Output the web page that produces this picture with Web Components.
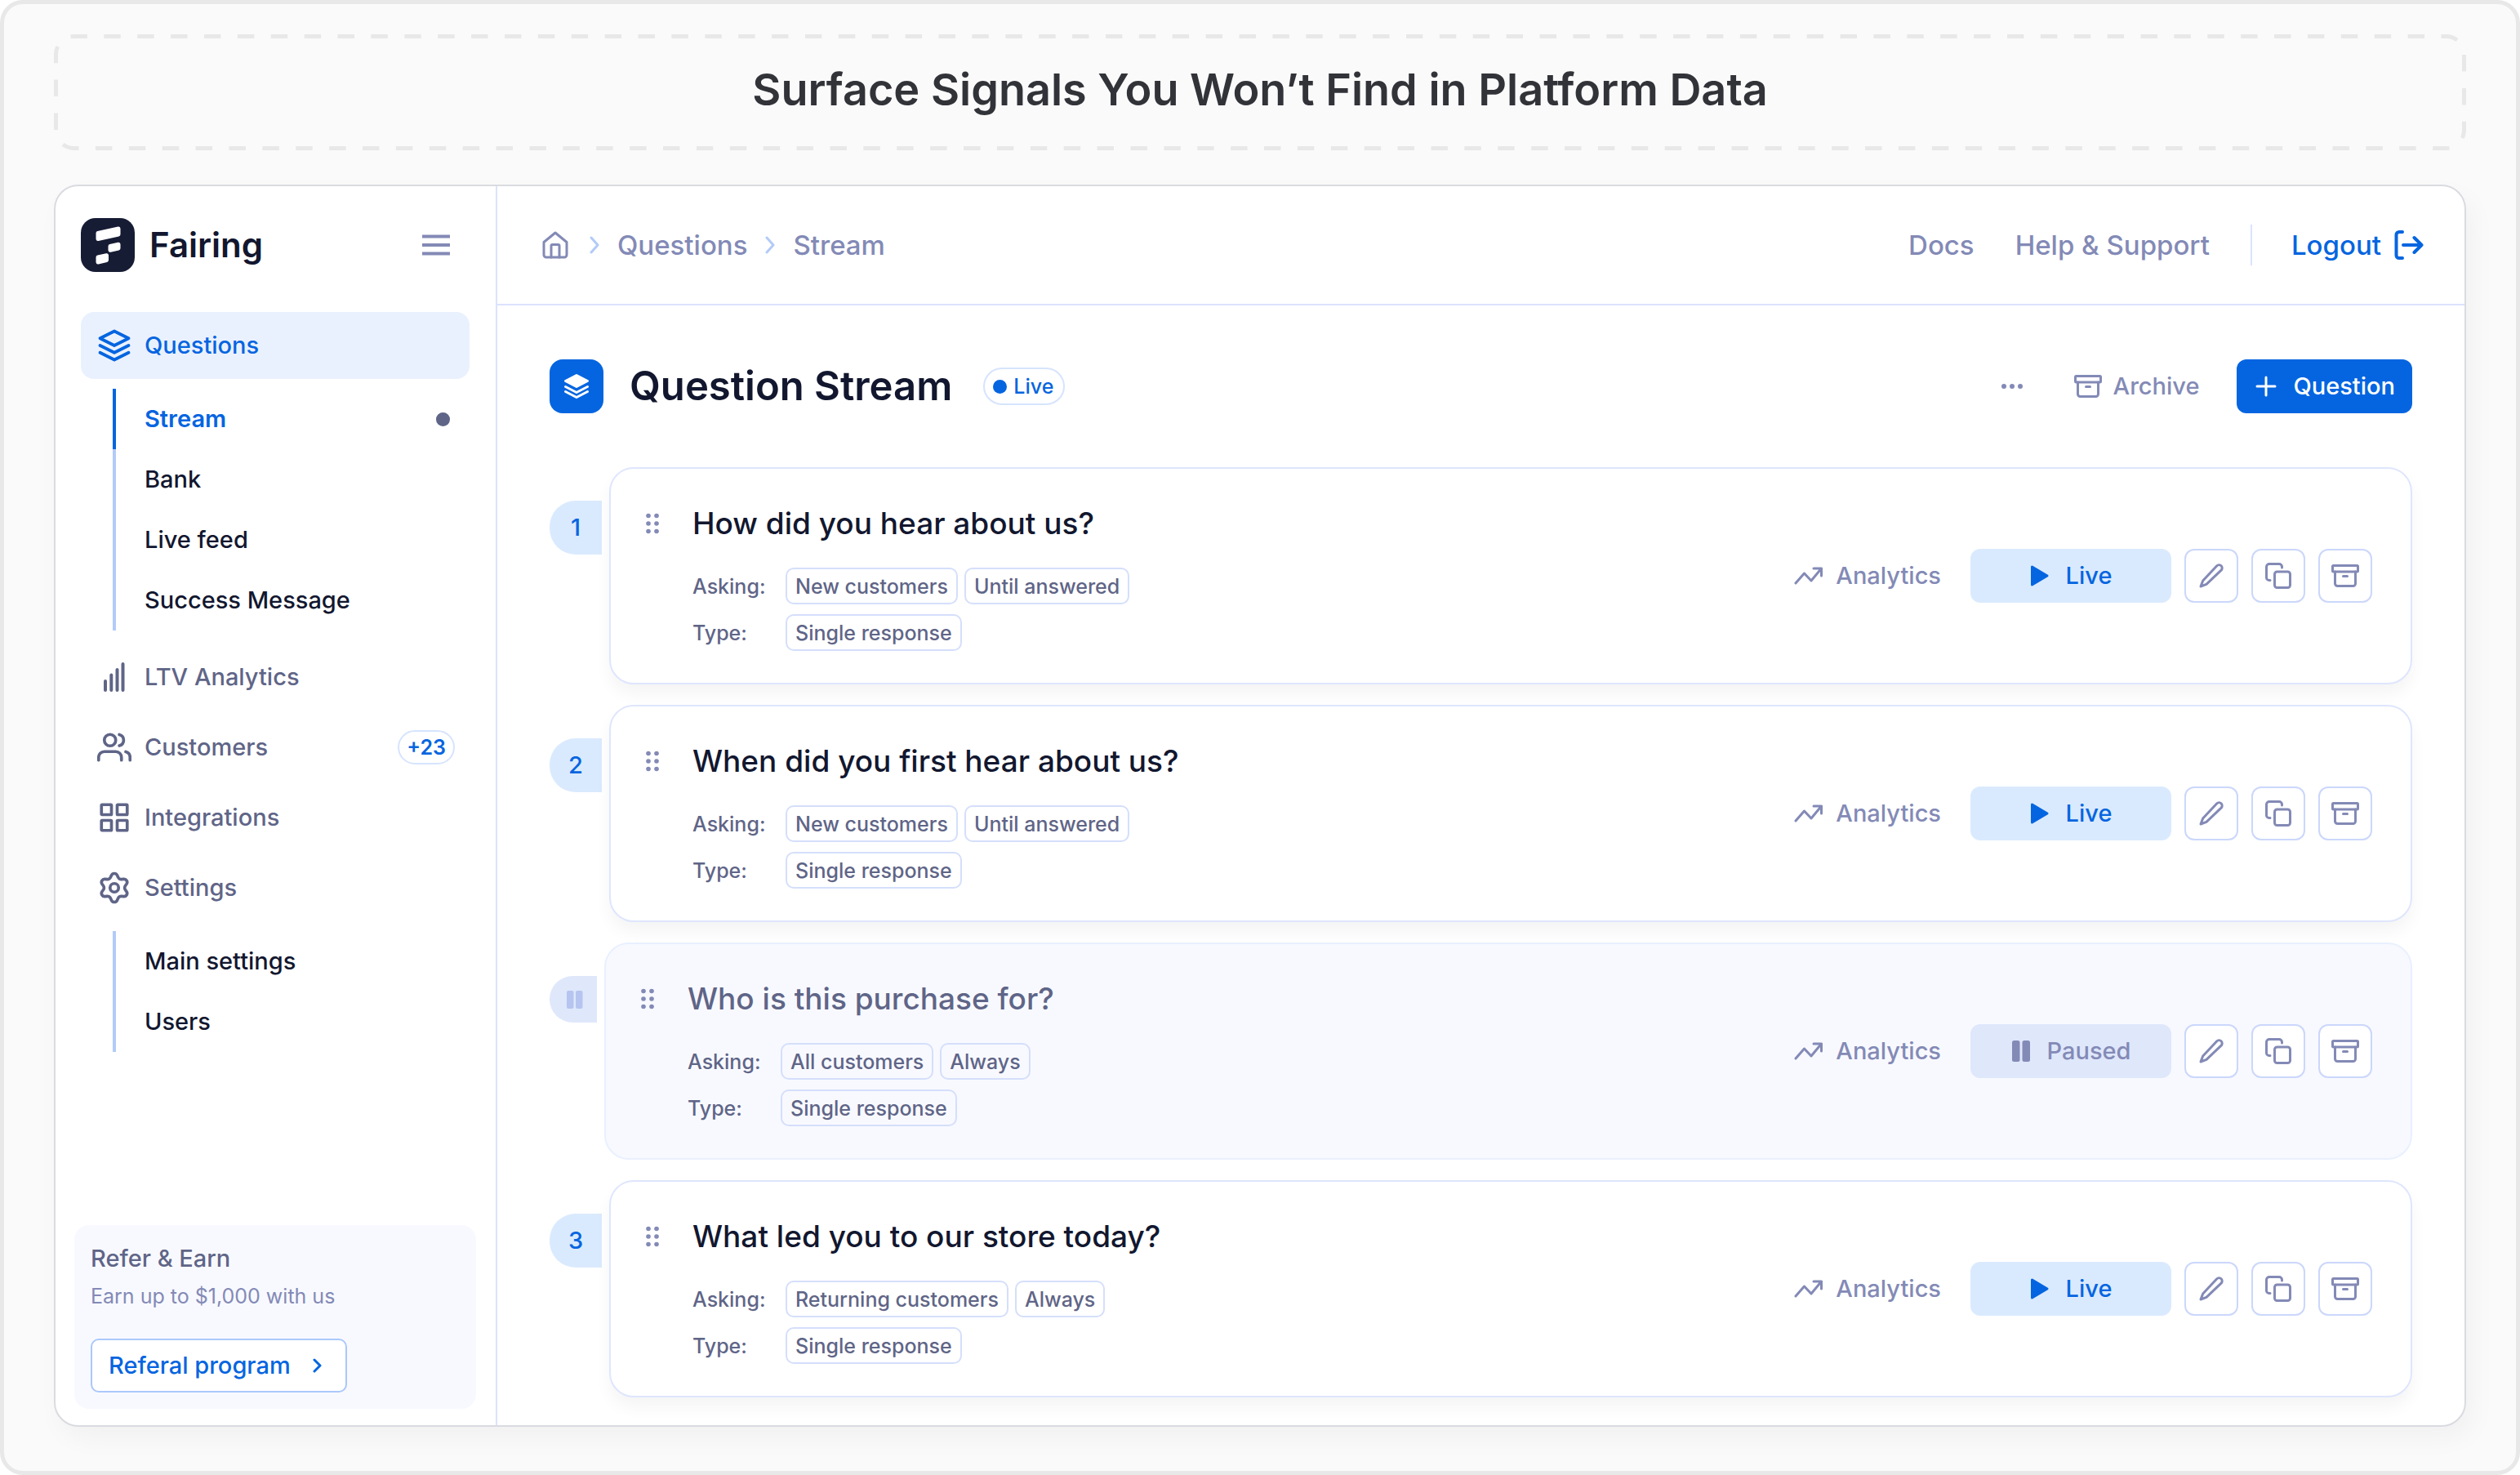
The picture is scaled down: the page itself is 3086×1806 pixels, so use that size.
<!DOCTYPE html>
<html lang="en">
<head>
<meta charset="utf-8">
<title>Fairing – Question Stream</title>
<style>
  :root {
    --ink: #12172f; --slate: #5f6587; --muted: #838ab6; --blue: #0565e0;
    --line: #dbe3fd; --tint: #daeafe; --wash: #f8f9ff;
  }
  body { margin: 0; background: #fff; color: var(--ink); font-family: Inter, "Liberation Sans", sans-serif; font-weight: 500; font-size: 29px; line-height: 36px; }
</style>
</head>
<body>
<promo-frame>
  <span slot="title">Surface Signals You Won’t Find in Platform Data</span>
  <app-shell>
    <side-bar slot="side">
      <nav-item icon="layers" active>Questions</nav-item>
      <nav-sub>
        <nav-link active>Stream</nav-link>
        <nav-link>Bank</nav-link>
        <nav-link>Live feed</nav-link>
        <nav-link>Success Message</nav-link>
      </nav-sub>
      <nav-item icon="bars">LTV Analytics</nav-item>
      <nav-item icon="users" badge="+23">Customers</nav-item>
      <nav-item icon="grid">Integrations</nav-item>
      <nav-item icon="gear">Settings</nav-item>
      <nav-sub>
        <nav-link>Main settings</nav-link>
        <nav-link>Users</nav-link>
      </nav-sub>
      <refer-card slot="foot"></refer-card>
    </side-bar>
    <top-bar slot="top"></top-bar>
    <stream-head></stream-head>
    <question-list>
      <question-card number="1" asking="New customers|Until answered" type="Single response">How did you hear about us?</question-card>
      <question-card number="2" asking="New customers|Until answered" type="Single response">When did you first hear about us?</question-card>
      <question-card paused asking="All customers|Always" type="Single response">Who is this purchase for?</question-card>
      <question-card number="3" asking="Returning customers|Always" type="Single response">What led you to our store today?</question-card>
    </question-list>
  </app-shell>
</promo-frame>

<script>
const RESET = `
  *, *::before, *::after { box-sizing: border-box; }
  button { font: inherit; color: inherit; background: none; border: 0; padding: 0; margin: 0; cursor: pointer; }
  a { color: inherit; text-decoration: none; }
  h1, h2, p, dl, dd, dt { margin: 0; font: inherit; }
`;
const define = (name, render) => customElements.define(name, class extends HTMLElement {
  constructor() { super(); this.attachShadow({ mode: 'open' }); }
  connectedCallback() {
    const t = document.createElement('template');
    t.innerHTML = render(this);
    this.shadowRoot.replaceChildren(t.content.cloneNode(true));
    const s = document.createElement('style');
    s.textContent = RESET;
    this.shadowRoot.prepend(s);
  }
});

/* name: [width, height, viewBox, stroke width, markup] */
const ICONS = {
  layers: [42, 42, '0 0 24 24', 2.2, '<path d="M12 2 2 7l10 5 10-5z"/><path d="m2 12 10 5 10-5M2 17l10 5 10-5"/>'],
  layersFill: [32, 32, '0 0 32 32', 3, '<path d="M16 2.500 2.500 9.500 16 16.500l13.500-7z" fill="currentColor"/><path d="m2.500 16.500 13.500 7 13.500-7M2.500 22.500l13.500 7 13.500-7"/>'],
  bars: [42, 42, '0 0 42 42', 4, '<path d="M10 37V26M17.300 37V18.500M24.500 37V12M31.500 37V5"/>'],
  users: [42, 42, '0 0 24 24', 2.1, '<path d="M17 21v-2a4 4 0 0 0-4-4H5a4 4 0 0 0-4 4v2"/><circle cx="9" cy="7" r="4"/><path d="M23 21v-2a4 4 0 0 0-3-3.870M15.500 3.130a4 4 0 0 1 0 7.750"/>'],
  grid: [42, 42, '0 0 24 24', 2.1, '<rect x="3" y="3" width="7" height="7" rx=".4"/><rect x="14" y="3" width="7" height="7" rx=".4"/><rect x="14" y="14" width="7" height="7" rx=".4"/><rect x="3" y="14" width="7" height="7" rx=".4"/>'],
  gear: [42, 42, '0 0 24 24', 2.1, '<path d="M9.395 19.371l.584 1.315a2.214 2.214 0 0 0 4.045 0l.584-1.315a2.400 2.400 0 0 1 1-1.111 2.460 2.460 0 0 1 1.470-.312l1.430.152a2.210 2.210 0 0 0 2.149-1.094 2.212 2.212 0 0 0-.126-2.408l-.847-1.164A2.440 2.440 0 0 1 19.224 12c0-.513.162-1.014.464-1.429l.847-1.163A2.211 2.211 0 0 0 20.662 7a2.210 2.210 0 0 0-2.149-1.094l-1.430.152a2.460 2.460 0 0 1-1.470-.312 2.420 2.420 0 0 1-1-1.117l-.589-1.315a2.214 2.214 0 0 0-4.045 0l-.584 1.315c-.207.468-.557.860-1 1.117a2.460 2.460 0 0 1-1.470.312l-1.434-.152A2.210 2.210 0 0 0 3.342 7a2.211 2.211 0 0 0 .126 2.408l.847 1.163c.302.415.464.916.464 1.429s-.162 1.014-.464 1.429l-.847 1.163A2.211 2.211 0 0 0 3.342 17a2.215 2.215 0 0 0 2.149 1.094l1.430-.152a2.460 2.460 0 0 1 1.470.312c.445.257.796.648 1.004 1.117z"/><circle cx="12" cy="12" r="3"/>'],
  menu: [34, 26, '0 0 34 26', 4, '<path stroke-linecap="butt" d="M0 2.500h34M0 13h34M0 23.500h34"/>'],
  home: [32, 34, '0 0 32 34', 3, '<path d="M2 13.500 16 2l14 11.500V29a3 3 0 0 1-3 3H5a3 3 0 0 1-3-3z"/><path d="M11 32V18a1.500 1.500 0 0 1 1.500-1.500h7A1.500 1.500 0 0 1 21 18v14"/>'],
  chevron: [12, 22, '0 0 12 22', 3, '<path d="m2 2 8 9-8 9"/>'],
  chevronSm: [12, 18, '0 0 12 18', 3, '<path d="m2 2 7 7-7 7"/>'],
  logout: [36, 36, '0 0 36 36', 4, '<path d="M10 2H6a3.500 3.500 0 0 0-3.500 3.500v25A3.500 3.500 0 0 0 6 34h4M11 18h22M24.500 9l9 9-9 9"/>'],
  archive: [34, 28, '0 0 34 28', 3, '<rect x="1.500" y="1.500" width="31" height="7.500" rx="1"/><path d="M4.500 9v14.500a3 3 0 0 0 3 3h19a3 3 0 0 0 3-3V9M14.500 14.500h5"/>'],
  dots: [28, 8, '0 0 28 8', 0, '<g fill="currentColor"><circle cx="4" cy="4" r="3"/><circle cx="14" cy="4" r="3"/><circle cx="24" cy="4" r="3"/></g>'],
  plus: [26, 26, '0 0 26 26', 3, '<path d="M13 2v22M2 13h22"/>'],
  drag: [18, 26, '0 0 18 26', 0, '<g fill="currentColor"><circle cx="4" cy="3.500" r="2.800"/><circle cx="14" cy="3.500" r="2.800"/><circle cx="4" cy="13" r="2.800"/><circle cx="14" cy="13" r="2.800"/><circle cx="4" cy="22.500" r="2.800"/><circle cx="14" cy="22.500" r="2.800"/></g>'],
  trend: [36, 24, '0 0 36 24', 3, '<path d="m2 21 10.500-12 8.500 9L33.500 3M24 3h9.500v9"/>'],
  play: [24, 28, '0 0 24 28', 3, '<path d="M2.500 3v22L21 14z" fill="currentColor"/>'],
  pause: [24, 26, '0 0 24 26', 0, '<g fill="currentColor"><rect x="1" y="0" width="9.500" height="26" rx="2.500"/><rect x="13.500" y="0" width="9.500" height="26" rx="2.500"/></g>'],
  pauseSm: [20, 22, '0 0 20 22', 0, '<g fill="currentColor"><rect x="0" y="0" width="8.500" height="22" rx="2"/><rect x="11" y="0" width="8.500" height="22" rx="2"/></g>'],
  pencil: [30, 30, '0 0 30 30', 3, '<path d="M21.800 2.800a3.600 3.600 0 0 1 5.300 5.300L9 25.300 2 28l2.700-7z"/>'],
  copy: [32, 32, '0 0 32 32', 3, '<rect x="11.500" y="11" width="19" height="19.500" rx="3"/><path d="M6 21.500H5A3.300 3.300 0 0 1 1.500 18V5A3.500 3.500 0 0 1 5 1.500h12A3.500 3.500 0 0 1 20.500 5v1"/>'],
  logo: [66, 66, '0 0 66 66', 5, '<rect width="66" height="66" rx="18" fill="#171c35" stroke="none"/><g fill="#fff" stroke="#fff"><path d="M21 18.500 46 13v7L21 25.500zM36 34.500l10-2.200v4.700l-10 2.200zM21 48l10.500-2.200V51.500L21 54z"/></g>'],
};
define('ui-icon', el => {
  const [w, h, box, sw, body] = ICONS[el.getAttribute('name')];
  return `<style>:host { display: block; flex: none; } svg { display: block; }</style>
  <svg width="${w}" height="${h}" viewBox="${box}" fill="none" stroke="${sw ? 'currentColor' : 'none'}" stroke-width="${sw}" stroke-linecap="round" stroke-linejoin="round" aria-hidden="true">${body}</svg>`;
});

define('promo-frame', () => `
  <style>
    :host { display: flex; flex-direction: column; gap: 42px; box-sizing: border-box; min-height: 100vh; padding: 37px 61px 54px; border: 5px solid #e8e8e8; border-radius: 28px; background: #fafafa; }
    header { position: relative; display: flex; align-items: center; justify-content: center; padding: 35px 24px 41px; }
    h1 { font-size: 54px; line-height: 66px; font-weight: 600; color: #313338; }
    svg { position: absolute; inset: 0; width: 100%; height: 100%; overflow: visible; }
    rect { x: 2.5px; y: 2.5px; width: calc(100% - 5px); height: calc(100% - 5px); rx: 22px; fill: none; stroke: #e8e8e8; stroke-width: 5px; }
    ::slotted(app-shell) { flex: 1; }
  </style>
  <header>
    <svg aria-hidden="true"><rect pathLength="300" stroke-dasharray="1 1" stroke-dashoffset="0.2"/></svg>
    <h1><slot name="title"></slot></h1>
  </header>
  <slot></slot>`);

define('app-shell', () => `
  <style>
    :host { display: grid; grid-template-columns: 541px 1fr; background: #fff; border: 2px solid #dadbe1; border-radius: 30px; overflow: hidden; box-shadow: 8px 14px 32px rgba(0,0,0,.04); }
    .side { display: flex; border-right: 2px solid var(--line); }
    ::slotted([slot=side]) { flex: 1; }
    main { padding: 66px 64px 34px; }
  </style>
  <div class="side"><slot name="side"></slot></div>
  <div><slot name="top"></slot><main><slot></slot></main></div>`);

define('side-bar', () => `
  <style>
    :host { display: flex; flex-direction: column; padding: 39px 32px 20px 31px; }
    .brand { display: flex; align-items: center; gap: 20px; margin-bottom: 49px; }
    .brand a { display: flex; align-items: center; gap: 18px; flex: 1; font-size: 42px; line-height: 48px; font-weight: 600; }
    button { color: var(--muted); margin-right: 24px; }
    nav { display: flex; flex-direction: column; gap: 4px; flex: 1; }
    ::slotted(refer-card) { margin: 0 -8px; }
  </style>
  <div class="brand"><a href="#"><ui-icon name="logo"></ui-icon>Fairing</a><button aria-label="Toggle menu"><ui-icon name="menu"></ui-icon></button></div>
  <nav><slot></slot></nav>
  <slot name="foot"></slot>`);

define('nav-item', el => `
  <style>
    :host { display: block; color: var(--slate); }
    :host([active]) { color: var(--blue); }
    a { display: flex; align-items: center; gap: 16px; height: 82px; padding: 0 18px 0 20px; border-radius: 16px; }
    :host([active]) a { background: #eaf1fe; }
    .label { flex: 1; }
    .badge { color: var(--blue); border: 2px solid #d6e4fd; border-radius: 21px; padding: 3px 9px; font-size: 25px; line-height: 32px; font-weight: 600; }
  </style>
  <a href="#"><ui-icon name="${el.getAttribute('icon')}"></ui-icon><span class="label"><slot></slot></span>${el.hasAttribute('badge') ? `<span class="badge">${el.getAttribute('badge')}</span>` : ''}</a>`);

define('nav-sub', () => `<style>:host { display: block; margin: 8px 0 12px 39px; }</style><slot></slot>`);

define('nav-link', el => `
  <style>
    :host { display: block; border-left: 4px solid #b2cbf8; }
    :host([active]) { border-color: var(--blue); color: var(--blue); }
    a { display: flex; align-items: center; justify-content: space-between; height: 74px; padding: 0 24px 0 35px; }
    :host([active]) a { font-weight: 600; }
    i { width: 17px; height: 17px; border-radius: 50%; background: var(--slate); }
  </style>
  <a href="#"><slot></slot>${el.hasAttribute('active') ? '<i></i>' : ''}</a>`);

define('refer-card', () => `
  <style>
    :host { display: block; background: var(--wash); border-radius: 18px; padding: 23px 20px 20px; }
    h2 { color: var(--slate); }
    p { color: var(--muted); font-size: 25px; line-height: 32px; margin: 12px 0 36px; font-weight: 400; }
    button { display: flex; align-items: center; gap: 27px; height: 66px; padding: 0 28px 0 20px; background: #fff; border: 2px solid #abc8fb; border-radius: 10px; color: var(--blue); }
  </style>
  <h2>Refer &amp; Earn</h2><p>Earn up to $1,000 with us</p>
  <button>Referal program<ui-icon name="chevronSm"></ui-icon></button>`);

define('top-bar', () => `
  <style>
    :host { display: flex; align-items: center; justify-content: space-between; height: 144px; padding: 0 50px 0 55px; border-bottom: 2px solid var(--line); color: var(--muted); font-size: 33px; line-height: 40px; }
    nav { display: flex; align-items: center; }
    .crumbs { gap: 22px; }
    .home { padding-right: 4px; }
    .crumbs ui-icon[name=chevron] { color: #b2cbf8; }
    .links { gap: 50px; }
    .logout { display: flex; align-items: center; gap: 16px; color: var(--blue); border-left: 2px solid var(--line); padding: 5px 0 5px 48px; }
  </style>
  <nav class="crumbs" aria-label="Breadcrumb"><a class="home" href="#" aria-label="Home"><ui-icon name="home"></ui-icon></a><ui-icon name="chevron"></ui-icon><a href="#">Questions</a><ui-icon name="chevron"></ui-icon><a href="#">Stream</a></nav>
  <nav class="links"><a href="#">Docs</a><a href="#">Help &amp; Support</a><a class="logout" href="#">Logout<ui-icon name="logout"></ui-icon></a></nav>`);

define('stream-head', () => `
  <style>
    :host { display: flex; align-items: center; justify-content: space-between; margin-bottom: 66px; }
    div { display: flex; align-items: center; }
    .tile { width: 66px; height: 66px; border-radius: 16px; background: var(--blue); color: #fff; justify-content: center; margin-right: 32px; }
    h1 { font-size: 49px; line-height: 60px; font-weight: 600; margin-right: 38px; }
    .pill { display: flex; align-items: center; gap: 8px; height: 46px; padding: 0 12px 0 10px; border: 2px solid #d6e4fd; border-radius: 23px; color: var(--blue); font-size: 25px; line-height: 32px; }
    .pill::before { content: ""; width: 17px; height: 17px; border-radius: 50%; background: currentColor; }
    .actions { color: var(--muted); gap: 62px; }
    .archive { display: flex; align-items: center; gap: 14px; }
    .add { display: flex; align-items: center; gap: 20px; height: 66px; padding: 0 21px 0 23px; margin-left: -16px; border-radius: 12px; background: var(--blue); color: #fff; }
  </style>
  <div><div class="tile"><ui-icon name="layersFill"></ui-icon></div><h1>Question Stream</h1><span class="pill">Live</span></div>
  <div class="actions"><button aria-label="More"><ui-icon name="dots"></ui-icon></button><button class="archive"><ui-icon name="archive"></ui-icon>Archive</button><button class="add"><ui-icon name="plus"></ui-icon>Question</button></div>`);

define('question-list', () => `<style>:host { display: flex; flex-direction: column; gap: 25px; }</style><slot></slot>`);

define('question-card', el => {
  const paused = el.hasAttribute('paused');
  const tags = key => el.getAttribute(key).split('|').map(t => `<span class="tag">${t}</span>`).join('');
  return `
  <style>
    :host { display: flex; align-items: flex-start; gap: 9px; }
    .num { display: flex; align-items: center; justify-content: center; width: 64px; height: 66px; margin-top: 41px; border-radius: 32px 0 0 32px; background: var(--tint); color: var(--blue); }
    article { flex: 1; display: flex; align-items: center; gap: 36px; background: #fff; border: 2px solid #dfe6fd; border-radius: 30px; padding: 0 47px 0 42px; box-shadow: 0 12px 20px rgba(0,0,0,.045); position: relative; }
    .body { flex: 1; display: flex; align-items: flex-start; gap: 40px; padding: 45px 0 39px; }
    .drag { color: var(--muted); padding: 9px 0; cursor: grab; }
    h2 { font-size: 37px; line-height: 44px; margin-bottom: 32px; }
    dl { display: grid; grid-template-columns: 114px auto; gap: 12px 0; align-items: center; color: var(--slate); font-size: 25px; line-height: 32px; }
    dd { display: flex; gap: 8px; }
    .tag { height: 45px; display: flex; align-items: center; padding: 0 10px; border: 2px solid #d5dffb; border-radius: 10px; }
    .analytics { display: flex; align-items: center; gap: 15px; color: var(--muted); }
    .actions { display: flex; gap: 16px; }
    .state { display: flex; align-items: center; justify-content: center; gap: 20px; width: 246px; height: 66px; border-radius: 12px; background: var(--tint); color: var(--blue); }
    .sq { display: flex; align-items: center; justify-content: center; width: 66px; height: 66px; border: 2px solid #cbd7fb; border-radius: 12px; background: #fff; color: var(--muted); }
    :host([paused]) .num { width: 58px; height: 57px; padding-left: 4px; background: #dfe7fb; color: #b5c5ef; }
    :host([paused]) article { background: var(--wash); border-color: #e9f0fe; box-shadow: none; }
    :host([paused]) h2 { color: var(--slate); }
    :host([paused]) .state { background: #dfe7fb; color: var(--muted); }
  </style>
  <div class="num">${paused ? '<ui-icon name="pauseSm"></ui-icon>' : el.getAttribute('number')}</div>
  <article>
    <div class="body">
      <button class="drag" aria-label="Reorder"><ui-icon name="drag"></ui-icon></button>
      <div><h2><slot></slot></h2>
        <dl><dt>Asking:</dt><dd>${tags('asking')}</dd><dt>Type:</dt><dd>${tags('type')}</dd></dl></div>
    </div>
    <a class="analytics" href="#"><ui-icon name="trend"></ui-icon>Analytics</a>
    <div class="actions">
      <button class="state"><ui-icon name="${paused ? 'pause' : 'play'}"></ui-icon>${paused ? 'Paused' : 'Live'}</button>
      <button class="sq" aria-label="Edit"><ui-icon name="pencil"></ui-icon></button>
      <button class="sq" aria-label="Duplicate"><ui-icon name="copy"></ui-icon></button>
      <button class="sq" aria-label="Archive"><ui-icon name="archive"></ui-icon></button>
    </div>
  </article>`;
});
</script>
</body>
</html>
